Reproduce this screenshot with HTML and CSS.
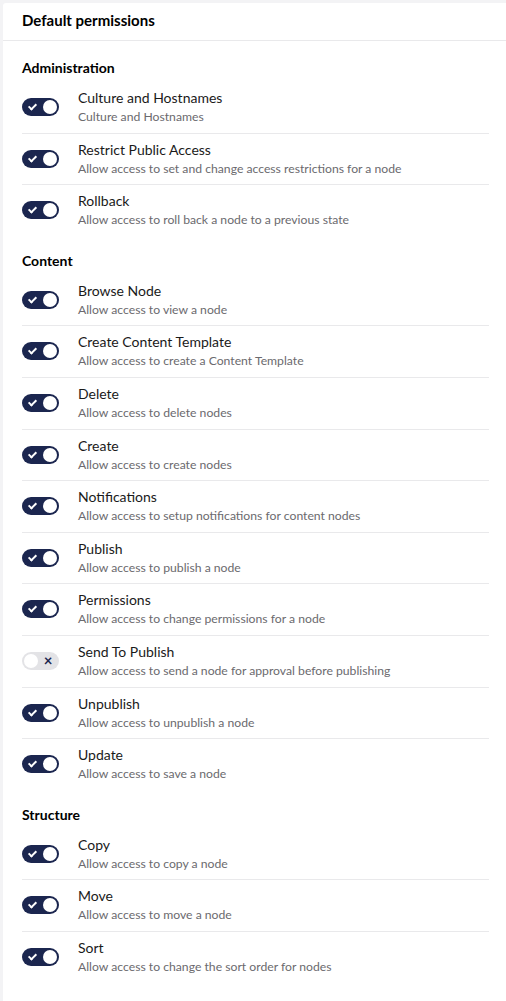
FILE: index.html
```html
<!DOCTYPE html>
<html lang="en">
<head>
<meta charset="utf-8">
<title>Default permissions</title>
<link rel="stylesheet" href="styles.css">
</head>
<body>
<div class="card">
  <div class="card-header">Default permissions</div>
  <div class="card-body">
    <section class="group">
      <h3 class="group-title">Administration</h3>
      <div class="row"><span class="toggle on"></span><div class="text"><div class="name">Culture and Hostnames</div><div class="desc">Culture and Hostnames</div></div></div>
      <div class="row"><span class="toggle on"></span><div class="text"><div class="name">Restrict Public Access</div><div class="desc">Allow access to set and change access restrictions for a node</div></div></div>
      <div class="row"><span class="toggle on"></span><div class="text"><div class="name">Rollback</div><div class="desc">Allow access to roll back a node to a previous state</div></div></div>
    </section>
    <section class="group">
      <h3 class="group-title">Content</h3>
      <div class="row"><span class="toggle on"></span><div class="text"><div class="name">Browse Node</div><div class="desc">Allow access to view a node</div></div></div>
      <div class="row"><span class="toggle on"></span><div class="text"><div class="name">Create Content Template</div><div class="desc">Allow access to create a Content Template</div></div></div>
      <div class="row"><span class="toggle on"></span><div class="text"><div class="name">Delete</div><div class="desc">Allow access to delete nodes</div></div></div>
      <div class="row"><span class="toggle on"></span><div class="text"><div class="name">Create</div><div class="desc">Allow access to create nodes</div></div></div>
      <div class="row"><span class="toggle on"></span><div class="text"><div class="name">Notifications</div><div class="desc">Allow access to setup notifications for content nodes</div></div></div>
      <div class="row"><span class="toggle on"></span><div class="text"><div class="name">Publish</div><div class="desc">Allow access to publish a node</div></div></div>
      <div class="row"><span class="toggle on"></span><div class="text"><div class="name">Permissions</div><div class="desc">Allow access to change permissions for a node</div></div></div>
      <div class="row"><span class="toggle off"></span><div class="text"><div class="name">Send To Publish</div><div class="desc">Allow access to send a node for approval before publishing</div></div></div>
      <div class="row"><span class="toggle on"></span><div class="text"><div class="name">Unpublish</div><div class="desc">Allow access to unpublish a node</div></div></div>
      <div class="row"><span class="toggle on"></span><div class="text"><div class="name">Update</div><div class="desc">Allow access to save a node</div></div></div>
    </section>
    <section class="group">
      <h3 class="group-title">Structure</h3>
      <div class="row"><span class="toggle on"></span><div class="text"><div class="name">Copy</div><div class="desc">Allow access to copy a node</div></div></div>
      <div class="row"><span class="toggle on"></span><div class="text"><div class="name">Move</div><div class="desc">Allow access to move a node</div></div></div>
      <div class="row"><span class="toggle on"></span><div class="text"><div class="name">Sort</div><div class="desc">Allow access to change the sort order for nodes</div></div></div>
    </section>
  </div>
</div>
</body>
</html>
```
FILE: styles.css
```css
html, body {
  margin: 0;
  padding: 0;
  background: #f3f3f5;
  font-family: Lato, "Open Sans", "Liberation Sans", sans-serif;
  color: #000;
  overflow: hidden;
}

.card {
  margin: 3px 0 0 3px;
  background: #fff;
  border-top-left-radius: 3px;
  min-height: 1100px;
}

.card-header {
  height: 34px;
  display: flex;
  align-items: center;
  padding: 0 17px 3px 19px;
  border-bottom: 1px solid #e9e9eb;
  font-size: 15px;
  font-weight: 700;
}

.card-body {
  padding: 2px 17px 0 19px;
}

.group {
  padding-top: 15px;
}

.group-title {
  margin: 0 0 4px;
  font-size: 14px;
  line-height: 20px;
  font-weight: 700;
}

.row {
  display: flex;
  align-items: center;
  gap: 19px;
  padding: 6px 0 6.6px;
}

.row + .row {
  border-top: 1px solid #e9e9eb;
}

.text {
  min-width: 0;
}

.name {
  font-size: 14px;
  line-height: 20px;
  color: #1a1a1a;
}

.desc {
  font-size: 12.2px;
  line-height: 18px;
  color: #6b6a6e;
}

.toggle {
  position: relative;
  flex: none;
  width: 37px;
  height: 18px;
  border-radius: 9px;
  background: #1b264f;
}

.toggle::after {
  content: "";
  position: absolute;
  top: 2px;
  width: 14px;
  height: 14px;
  border-radius: 50%;
  background: #fff;
}

.toggle.on::after {
  right: 2px;
}

.toggle.on::before {
  content: "";
  position: absolute;
  left: 8px;
  top: 4px;
  width: 3px;
  height: 6px;
  border: solid #fff;
  border-width: 0 2px 2px 0;
  transform: rotate(45deg);
}

.toggle.off {
  background: #e3e3e6;
}

.toggle.off::after {
  left: 2px;
}

.toggle.off::before {
  content: "\00d7";
  position: absolute;
  left: 21px;
  top: 0;
  width: 10px;
  height: 18px;
  line-height: 17px;
  text-align: center;
  font-size: 15px;
  font-weight: 700;
  color: #1b264f;
}
```
